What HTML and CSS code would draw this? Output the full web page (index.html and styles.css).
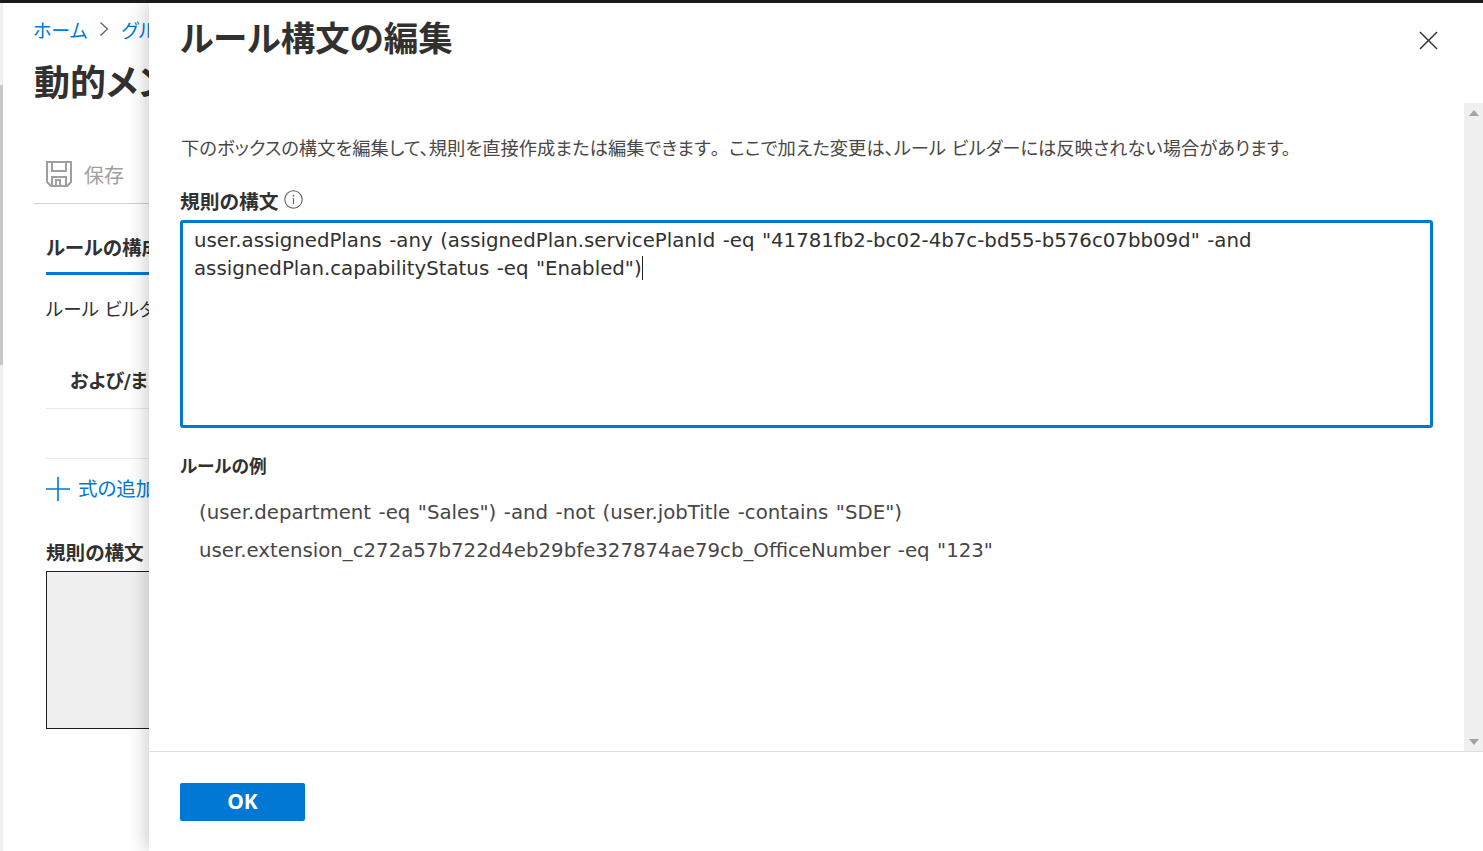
FILE: index.html
```html
<!DOCTYPE html>
<html lang="ja">
<head>
<meta charset="utf-8">
<title>ルール構文の編集</title>
<link rel="stylesheet" href="styles.css">
</head>
<body>
<div class="topbar"></div>
<div class="stage">
  <div class="rail"><div class="rail-thumb"></div></div>
  <main class="page">
    <nav class="crumbs"><a>ホーム</a>
      <svg class="chev" viewBox="0 0 10 16"><path d="M1.5 1.5 8.5 8l-7 6.5" fill="none" stroke="#605e5c" stroke-width="1.2"/></svg>
      <a>グループ</a></nav>
    <h1 class="page-title">動的メンバーシップ ルール</h1>
    <div class="toolbar">
      <svg class="save" viewBox="0 0 26 26"><path d="M1 1h24v20l-4 4H5l-4-4z M6 1v9h14V1 M6 25v-9h14v9 M10 25v-6h4v6" fill="none" stroke="#a19f9d" stroke-width="2"/></svg>
      <span>保存</span>
    </div>
    <div class="tabs"><span class="tab">ルールの構成</span></div>
    <p class="builder">ルール ビルダーを使用</p>
    <div class="col-head">および/または</div>
    <div class="empty-row"></div>
    <div class="add"><svg class="plus" viewBox="0 0 24 24"><path d="M12 0v24M0 12h24" stroke="#0078d4" stroke-width="1.6" fill="none"/></svg><span>式の追加</span></div>
    <div class="syntax-label">規則の構文</div>
    <div class="syntax-box"></div>
  </main>
  <aside class="panel">
    <header class="panel-head">
      <h2 class="panel-title">ルール構文の編集</h2>
      <svg class="close" viewBox="0 0 20 20"><path d="M1 1l18 18M19 1 1 19" stroke="#323130" stroke-width="1.5" fill="none"/></svg>
    </header>
    <div class="panel-body">
      <div class="panel-content">
        <p class="intro">下のボックスの構文を編集して、規則を直接作成または編集できます<span class="full-stop">。</span>ここで加えた変更は、ルール ビルダーには反映されない場合があります。</p>
        <div class="label-row"><label class="field-label">規則の構文</label>
          <svg class="info" viewBox="0 0 20 20"><circle cx="10" cy="10" r="9.2" fill="none" stroke="#605e5c" stroke-width="1.1"/><path d="M10 8.6v6" stroke="#605e5c" stroke-width="1.2"/><circle cx="10" cy="5.9" r=".9" fill="#605e5c"/></svg>
        </div>
        <div class="editor">user.assignedPlans -any (assignedPlan.servicePlanId -eq "41781fb2-bc02-4b7c-bd55-b576c07bb09d" -and assignedPlan.capabilityStatus -eq "Enabled")<span class="caret"></span></div>
        <div class="examples-label">ルールの例</div>
        <p class="example first">(user.department -eq "Sales") -and -not (user.jobTitle -contains "SDE")</p>
        <p class="example">user.extension_c272a57b722d4eb29bfe327874ae79cb_OfficeNumber -eq "123"</p>
      </div>
      <div class="scrollbar">
        <svg class="arrow" viewBox="0 0 10 6"><path d="M5 0l5 6H0z" fill="#a3a3a3"/></svg>
        <svg class="arrow" viewBox="0 0 10 6"><path d="M0 0h10L5 6z" fill="#a3a3a3"/></svg>
      </div>
    </div>
    <footer class="panel-foot"><button class="ok">OK</button></footer>
  </aside>
</div>
</body>
</html>
```
FILE: styles.css
```css
* { box-sizing: border-box; }
html, body { margin: 0; height: 100%; overflow: hidden; }
body { font-family: "DejaVu Sans", "Noto Sans CJK JP", sans-serif; color: #323130; background: #fff; display: flex; flex-direction: column; font-feature-settings: "palt"; }
.topbar { height: 3px; background: #1b1a19; flex: none; }
.stage { flex: 1; position: relative; display: flex; overflow: hidden; }
.rail { width: 3px; background: #f0f0f0; flex: none; }
.rail-thumb { height: 280px; margin-top: 82px; background: #c8c8c8; }
.page { flex: 1; padding: 0 0 0 31px; white-space: nowrap; overflow: hidden; }
.crumbs { display: flex; align-items: center; height: 28px; margin: 12px 0 0 -1px; font-size: 19px; color: #0078d4; gap: 12px; font-family: "Noto Sans CJK JP", sans-serif; }
.chev { width: 10px; height: 16px; }
.page-title { margin: 13px 0 0; font-size: 36px; line-height: 48px; font-weight: 700; font-family: "Noto Sans CJK JP", sans-serif; }
.toolbar { display: flex; align-items: center; gap: 12px; height: 42px; margin-top: 49px; padding-left: 12px; color: #a19f9d; font-size: 20px; }
.save { width: 26px; height: 26px; }
.tabs { border-top: 1px solid #d2d0ce; margin-top: 8px; padding: 28px 0 0 12px; }
.tab { display: block; font-size: 19.5px; font-weight: 700; line-height: 34px; border-bottom: 3px solid #0078d4; padding-bottom: 6px; width: 300px; }
.builder { margin: 20px 0 0 12px; font-size: 18.5px; line-height: 30px; }
.col-head { margin: 41px 0 0 12px; padding: 0 0 12px 24px; font-size: 19px; line-height: 30px; font-weight: 700; border-bottom: 1px solid #edebe9; }
.empty-row { margin-left: 12px; height: 50px; border-bottom: 1px solid #edebe9; }
.add { display: flex; align-items: center; gap: 8px; margin: 17px 0 0 12px; color: #0078d4; font-size: 19.5px; line-height: 28px; }
.plus { width: 24px; height: 24px; margin-top: -2px; }
.syntax-label { margin: 35px 0 0 12px; font-size: 19.6px; line-height: 30px; font-weight: 700; }
.syntax-box { margin: 2px 0 0 12px; width: 300px; height: 158px; background: #f0f0f0; border: 1px solid #201f1e; }
.panel { position: absolute; left: 149px; top: 0; right: 0; bottom: 0; background: #fff; box-shadow: -3px 0 18px rgba(0,0,0,.2); display: flex; flex-direction: column; }
.panel-head { flex: none; height: 100px; position: relative; padding: 12px 0 0 31px; }
.panel-title { margin: 0; font-size: 34.5px; line-height: 48px; font-weight: 700; }
.close { position: absolute; top: 28px; right: 45px; width: 19px; height: 19px; }
.panel-body { flex: 1; display: flex; min-height: 0; border-bottom: 1px solid #e1dfdd; }
.panel-content { flex: 1; padding: 0 31px 0 31px; min-width: 0; }
.intro { margin: 32px 0 0 1px; font-size: 18.3px; line-height: 28px; color: #4a4846; white-space: nowrap; }
.full-stop { font-feature-settings: normal; }
.label-row { display: flex; align-items: flex-start; gap: 5px; margin-top: 25px; height: 32px; }
.field-label { font-size: 19.8px; font-weight: 700; line-height: 30px; }
.info { width: 19px; height: 19px; margin-top: 2px; }
.editor { height: 208px; border: 3px solid #0078d4; border-radius: 3px; padding: 4px 11px; font-size: 19.75px; word-spacing: 1.2px; line-height: 28px; color: #323130; }
.caret { display: inline-block; width: 1px; height: 24px; background: #201f1e; vertical-align: -5px; }
.examples-label { margin-top: 24px; font-size: 17.7px; line-height: 30px; font-weight: 700; }
.example { margin: 8px 0 0 19px; font-size: 19.75px; word-spacing: 1.2px; line-height: 30px; color: #484644; white-space: nowrap; }
.example.first { margin-top: 16px; }
.scrollbar { flex: none; width: 19px; background: #f0f0f0; display: flex; flex-direction: column; justify-content: space-between; padding: 7px 4px 6px; }
.arrow { width: 10px; height: 6px; display: block; margin: 0 auto; }
.panel-foot { flex: none; height: 99px; padding: 31px 0 0 31px; }
.ok { display: block; width: 125px; height: 38px; background: #0078d4; color: #fff; border: 0; border-radius: 2px; font: 700 21px/32px "Noto Sans", sans-serif; padding: 0 0 3px; }
```
